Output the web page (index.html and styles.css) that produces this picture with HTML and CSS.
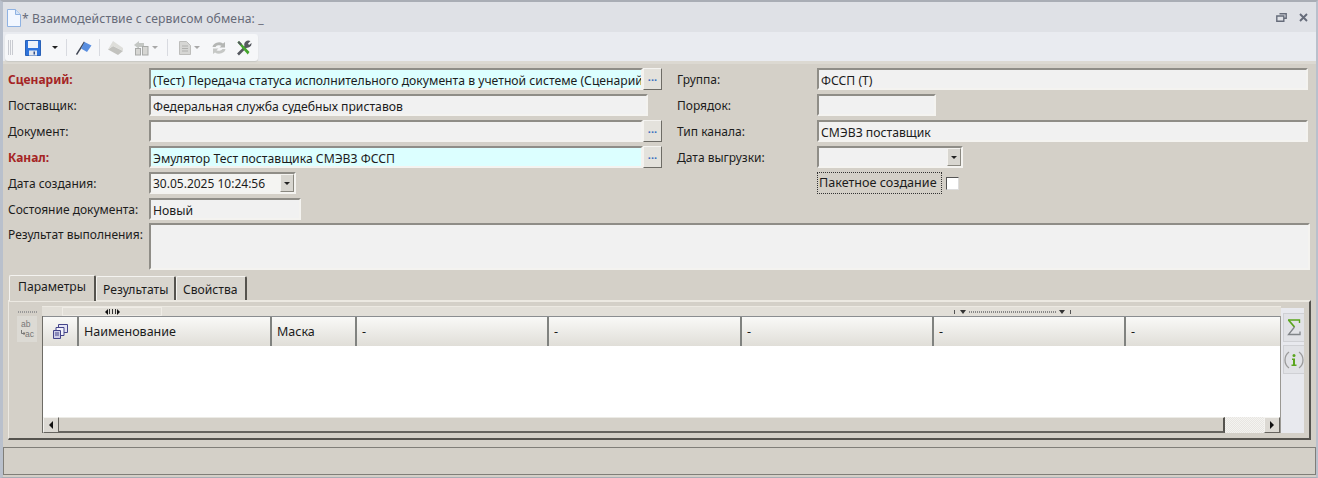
FILE: index.html
```html
<!DOCTYPE html>
<html lang="ru">
<head>
<meta charset="utf-8">
<title>Взаимодействие с сервисом обмена</title>
<link rel="stylesheet" href="styles.css">
</head>
<body>
<div class="window">
  <header class="titlebar">
    <svg class="doc-icon" width="15" height="18" viewBox="0 0 15 18"><path d="M1.500 .5h8l5 5v12h-13z" fill="#f2f7ff" stroke="#8fb2e2"/><path d="M9.500 .5v5h5" fill="#d4e4f8" stroke="#8fb2e2"/></svg>
    <span class="title">* Взаимодействие с сервисом обмена: _</span>
    <span class="spacer"></span>
    <svg class="win-btn" width="11" height="9" viewBox="0 0 11 9"><path d="M3.500 .8h6.700v4.400H8.500M.8 3h7v5.200h-7z" fill="none" stroke="#666c7a" stroke-width="1.400"/></svg>
    <svg class="win-btn close" width="9" height="9" viewBox="0 0 9 9"><path d="M1 1l7 7M8 1l-7 7" stroke="#666c7a" stroke-width="1.900"/></svg>
  </header>
  <div class="toolstrip">
    <div class="toolbar">
      <span class="grip"></span>
      <svg class="tool gap-11" width="16" height="16" viewBox="0 0 16 16"><path d="M.5 .5h15v15H.5z" fill="#2f74dc" stroke="#2a62b8"/><rect x="3" y="1" width="10" height="7" fill="#eef3fa"/><rect x="4" y="10.500" width="8" height="5" fill="#e4e8ee"/><rect x="8.500" y="11.500" width="1.500" height="3" fill="#2f4f8f"/></svg>
      <span class="caret dark gap-8"></span>
      <span class="sep"></span>
      <svg class="tool gap-7" width="16" height="16" viewBox="0 0 16 16"><path d="M.5 14.500L8.500 2" stroke="#3f4552" stroke-width="1.400"/><path d="M8.500 2L15.500 5.500 11 12 5 8.500z" fill="#5a8fe0"/></svg>
      <span class="sep tight"></span>
      <svg class="tool gap-9" width="17" height="16" viewBox="0 0 17 16"><path d="M1 9.500L6 6l10 5-5 4z" fill="#c2c2be"/><path d="M1 9.500L6 1l10 7v3L6 6z" fill="#dededa"/></svg>
      <svg class="tool gap-3" width="16" height="16" viewBox="0 0 16 16"><path d="M1 5l5-4v2h5v4H6v2z" fill="#c4c7c4"/><rect x="2.500" y="8.500" width="5" height="6.500" fill="#d6d6d3" stroke="#a8aaa8"/><rect x="9.500" y="6.500" width="5.500" height="8.500" fill="#d6d6d3" stroke="#a8aaa8"/></svg>
      <span class="caret gap-9"></span>
      <span class="sep"></span>
      <svg class="tool gap-1" width="16" height="16" viewBox="0 0 16 16"><path d="M2.500 1.500h7l4 4v9h-11z" fill="#d6d6d4" stroke="#bdbdbb"/><path d="M5 6h6M5 8.500h6M5 11h6" stroke="#b0b0ae"/></svg>
      <span class="caret gap-11"></span>
      <svg class="tool gap-9" width="16" height="16" viewBox="0 0 16 16"><path d="M1.500 7a6.500 5.500 0 0 1 10.500-3.500L14 2v5.500H8.500l2-1.700a4 3 0 0 0-6 1.200z" fill="#b4b6b4"/><path d="M14.500 9A6.500 5.500 0 0 1 4 12.500L2 14V8.500h5.500l-2 1.700a4 3 0 0 0 6-1.200z" fill="#c6c8c6"/></svg>
      <svg class="tool" width="16" height="16" viewBox="0 0 16 16"><path d="M2 14.500L11 5.500" stroke="#55585f" stroke-width="2.600"/><path d="M9 7a4.200 4.200 0 0 1 5.500-6l-2.500 2.500 1 1.500 2.500-2A4.200 4.200 0 0 1 9 7z" fill="#55585f"/><path d="M1.500 2.500L3 1l10.500 11-1.800 2.500z" fill="#44a52c"/><path d="M1.500 2.500L3 1l3 3-1.500 1.500z" fill="#55585f"/></svg>
    </div>
  </div>

  <main class="form">
    <div class="form-cols">
      <div class="col-left">
        <div class="row"><label class="lbl req">Сценарий:</label><div class="input req-bg grow">(Тест) Передача статуса исполнительного документа в учетной системе (Сценарий</div><button class="dots">...</button></div>
        <div class="row"><label class="lbl">Поставщик:</label><div class="input grow ro">Федеральная служба судебных приставов</div><span class="dots-gap-sm"></span></div>
        <div class="row"><label class="lbl">Документ:</label><div class="input grow ro"></div><button class="dots">...</button></div>
        <div class="row"><label class="lbl req">Канал:</label><div class="input req-bg grow">Эмулятор Тест поставщика СМЭВЗ ФССП</div><button class="dots">...</button></div>
        <div class="row"><label class="lbl">Дата создания:</label><div class="input combo date">30.05.2025 10:24:56<span class="combo-btn"><span class="caret dark flush"></span></span></div></div>
        <div class="row"><label class="lbl">Состояние документа:</label><div class="input ro state">Новый</div></div>
      </div>
      <div class="col-right">
        <div class="row"><label class="lbl rlbl">Группа:</label><div class="input ro grow">ФССП (Т)</div></div>
        <div class="row"><label class="lbl rlbl">Порядок:</label><div class="input ro order"></div></div>
        <div class="row"><label class="lbl rlbl">Тип канала:</label><div class="input ro grow">СМЭВЗ поставщик</div></div>
        <div class="row"><label class="lbl rlbl">Дата выгрузки:</label><div class="input combo ro upload"><span class="combo-btn"><span class="caret dark flush"></span></span></div></div>
        <div class="row"><span class="lbl rlbl"></span><span class="focus-label">Пакетное создание</span><span class="checkbox"></span></div>
      </div>
    </div>
    <div class="result-row"><label class="lbl">Результат выполнения:</label><div class="input ro grow result"></div></div>
  </main>

  <section class="tabs-area">
    <div class="tabs">
      <div class="tab active">Параметры</div>
      <div class="tab t2">Результаты</div>
      <div class="tab t3">Свойства</div>
    </div>
    <div class="tab-panel">
      <div class="side-left">
        <span class="dotted"></span>
        <div class="ab"><span class="ab-line">ab</span><span class="ab-line"><svg width="4" height="7" viewBox="0 0 4 7"><path d="M.5 0v3.500H4M2.500 2l1.500 1.500L2.500 5" fill="none" stroke="#777"/></svg>ac</span></div>
      </div>
      <div class="grid-wrap">
        <div class="ruler">
          <span class="ruler-cell"><i class="arr left tiny"></i><span class="ruler-bars"></span><i class="arr right tiny"></i></span>
          <span class="ruler-right"><span class="tick"></span><i class="tri"></i><span class="ruler-dots"></span><i class="tri"></i><span class="tick"></span></span>
        </div>
        <div class="grid">
          <div class="ghead">
            <div class="hc icon-c"><svg width="15" height="15" viewBox="0 0 15 15"><path d="M5.500 .5h9v8h-9z" fill="#e4e4f4" stroke="#44448a"/><path d="M3 3.500h8v8H3z" fill="#f2f2fa" stroke="#44448a"/><path d="M.5 6.500h7v8h-7z" fill="#cfcfe8" stroke="#44448a"/><path d="M2 9h4M2 11h4" stroke="#44448a"/></svg></div>
            <div class="hc">Наименование</div>
            <div class="hc">Маска</div>
            <div class="hc">-</div>
            <div class="hc">-</div>
            <div class="hc">-</div>
            <div class="hc">-</div>
            <div class="hc last">-</div>
          </div>
          <div class="gbody"></div>
          <div class="hscroll">
            <span class="sb-btn"><i class="arr left"></i></span>
            <span class="sb-thumb"></span>
            <span class="sb-track"></span>
            <span class="sb-btn"><i class="arr right"></i></span>
          </div>
        </div>
      </div>
      <div class="side-right">
        <div class="side-btn"><svg width="14" height="17" viewBox="0 0 14 17"><path d="M1 1h11.500v3" fill="none" stroke="#5aa51e" stroke-width="1.400"/><path d="M1.500 1l6 7" fill="none" stroke="#5aa51e" stroke-width="1.800"/><path d="M7.500 8l-6 7.500h11.500v-3" fill="none" stroke="#808488" stroke-width="1.300"/></svg></div>
        <div class="side-btn"><svg width="20" height="20" viewBox="0 0 20 20"><path d="M5 2a10 10 0 0 0 0 16M15 2a10 10 0 0 1 0 16" fill="none" stroke="#9a9a9a" stroke-width="1.300"/><circle cx="10" cy="5.500" r="1.500" fill="#5aa51e"/><path d="M8 8.500h3v6h1.500v1.500h-5v-1.500H9V10H8z" fill="#5aa51e"/></svg></div>
      </div>
    </div>
  </section>

  <footer class="statusbar"></footer>
</div>
</body>
</html>
```
FILE: styles.css
```css
* { box-sizing: border-box; }
html, body { margin: 0; padding: 0; }
body { width: 1318px; height: 478px; overflow: hidden; font-family: "Noto Sans", "DejaVu Sans", sans-serif; font-size: 12.2px; color: #1c1c1c; }

.window { width: 1318px; height: 478px; background: #d4d0c8; border: 1px solid #a9adb5; border-left: 3px solid #b9c0cc; border-right: 2px solid #b9c0cc; border-top: 2px solid #a9adb5; display: flex; flex-direction: column; }

.titlebar { height: 30px; background: #dfe1e6; display: flex; align-items: center; padding: 0 8px 0 3px; flex: none; }
.doc-icon { margin-right: 1px; margin-top: 1px; }
.title { font-size: 12.15px; color: #666a78; letter-spacing: .12px; padding-top: 2px; }
.spacer { flex: 1; }
.close { margin-left: 12px; }

.toolstrip { height: 32px; background: #e9ebf0; flex: none; border-bottom: 3px solid #dcd9d2; padding: 2px 0 0 2px; }
.toolbar { width: 253px; height: 27px; background: #f6f7f9; border-radius: 3px; box-shadow: 0 1px 1px #c8c8c4; display: flex; align-items: center; padding-left: 3px; }
.grip { width: 5px; height: 15px; background: repeating-linear-gradient(90deg, #c9cbd1 0 1px, transparent 1px 2px); margin-right: 12px; }
.tool { flex: none; }
.gap-1 { margin-right: 1px; }
.gap-3 { margin-right: 3px; }
.gap-7 { margin-right: 7px; }
.gap-8 { margin-right: 8px; }
.gap-9 { margin-right: 9px; }
.gap-11 { margin-right: 11px; }
.caret { display: inline-block; width: 0; height: 0; border: 3px solid transparent; border-top: 3px solid #a8a8a8; border-bottom: 0; flex: none; }
.caret.dark { border-top-color: #222; }
.caret.flush { margin: 0; }
.sep { width: 1px; height: 17px; background: #d8dae0; margin-right: 9px; flex: none; }
.sep.tight { margin-right: 7px; }

.form { flex: none; padding: 2px 6px 0 5px; height: 208px; }
.form-cols { display: flex; height: 153px; }
.col-left { width: 654px; flex: none; }
.col-right { width: 631px; margin-left: 15px; flex: none; }
.row { display: flex; align-items: center; height: 26px; }
.lbl { width: 141px; flex: none; white-space: nowrap; font-size: 12px; }
.rlbl { width: 140px; }
.req { color: #a52424; font-weight: 700; }
.input { height: 22px; line-height: 17px; padding: 2px 2px; background: #f1f1f1; border: 2px solid; border-color: #8f8d87 #f4f3f0 #f4f3f0 #8f8d87; white-space: nowrap; overflow: hidden; }
.grow { flex: 1; min-width: 0; }
.req-bg { background: #dcffff; }
.dots { width: 19px; height: 22px; padding: 0 0 6px; font-size: 11px; font-weight: 700; line-height: 1; color: #3a6fc0; background: #e4e2dc; border: 1px solid; border-color: #f4f3f0 #6e6c66 #6e6c66 #f4f3f0; flex: none; font-family: inherit; }
.dots-gap-sm { width: 14px; flex: none; }
.combo { display: flex; justify-content: space-between; align-items: center; padding-right: 0; }
.date { width: 147px; background: #f4f4f2; font-size: 12px; }
.state { width: 152px; }
.order { width: 119px; }
.upload { width: 146px; justify-content: flex-end; }
.combo-btn { width: 14px; height: 18px; background: #d8d6d0; border: 1px solid; border-color: #f4f3f0 #8a8880 #8a8880 #f4f3f0; display: flex; align-items: center; justify-content: center; flex: none; }
.focus-label { height: 22px; font-size: 12.6px; line-height: 21px; padding: 0 2px; outline: 1px dotted #333; outline-offset: -1px; white-space: nowrap; width: 125px; }
.checkbox { width: 13px; height: 13px; background: #fff; border: 1px solid; border-color: #555 #ddd #ddd #555; margin-left: 4px; }

.result-row { display: flex; height: 47px; margin-top: 4px; }
.result-row .lbl { padding-top: 3px; }
.result { height: 47px; }

.tabs-area { flex: none; margin: 2px 5px 0 5px; }
.tabs { display: flex; height: 26px; align-items: flex-end; padding-left: 1px; }
.tab { height: 24px; padding: 4px 0 0 6px; background: #d8d5ce; border-top: 1px solid #f4f3f0; border-left: 1px solid #f4f3f0; border-right: 2px solid #55534e; border-radius: 2px 2px 0 0; white-space: nowrap; font-size: 12.15px; }
.tab.active { height: 26px; width: 87px; padding: 2px 0 0 8px; background: #d4d0c8; position: relative; top: 1px; z-index: 1; }
.t2 { width: 80px; }
.t3 { width: 71px; }
.tab-panel { height: 140px; border-top: 2px solid #ece9e2; border-left: 1px solid #ece9e2; border-right: 2px solid #55534e; border-bottom: 2px solid #55534e; display: flex; padding: 4px 5px 5px 6px; }
.side-left { width: 27px; flex: none; display: flex; flex-direction: column; align-items: flex-start; }
.dotted { width: 20px; height: 2px; margin: 5px 0 0 3px; background: repeating-linear-gradient(90deg, #999 0 1px, transparent 1px 2px); }
.ab { width: 20px; height: 26px; margin: 3px 0 0 2px; background: #dcdad4; color: #777; font-family: "Liberation Sans", sans-serif; font-size: 8.5px; line-height: 10px; padding: 3px 0 0 4px; display: flex; flex-direction: column; }
.ab-line { display: block; white-space: nowrap; }
.grid-wrap { width: 1239px; flex: none; display: flex; flex-direction: column; }
.ruler { height: 10px; display: flex; justify-content: space-between; background: #e2dfd8; border-top: 1px solid #ece9e2; }
.ruler-cell { width: 100px; margin-left: 20px; border: 1px solid #efece6; display: flex; align-items: center; justify-content: center; gap: 1px; }
.ruler-bars { width: 7px; height: 5px; background: repeating-linear-gradient(90deg, #333 0 1px, transparent 1px 3px); }
.ruler-right { display: flex; align-items: center; margin-right: 208px; gap: 3px; }
.tick { width: 1px; height: 4px; background: #555; margin: 0 2px; }
.tri { width: 0; height: 0; border: 3px solid transparent; border-top: 4px solid #333; border-bottom: 0; }
.ruler-dots { width: 87px; height: 2px; background: repeating-linear-gradient(90deg, #888 0 1px, transparent 1px 2px); }
.grid { flex: 1; border-left: 1px solid #6e6c66; border-right: 1px solid #9a9893; display: flex; flex-direction: column; background: #fff; }
.ghead { display: grid; grid-template-columns: 36px 193px 85px 192px 193px 192px 192px 1fr; height: 30px; flex: none; border-top: 1px solid #8a8d90; border-bottom: 1px solid #7f8a90; }
.hc { background: linear-gradient(#f9f9f7, #e0ded8); border-right: 2px solid #80827f; font-size: 12.5px; line-height: 29px; padding-left: 5px; white-space: nowrap; }
.hc.last { border-right: 0; }
.icon-c { display: flex; align-items: center; justify-content: center; padding-left: 0; }
.gbody { flex: 1; background: #fff; }
.hscroll { height: 16px; display: flex; flex: none; background: #d4d0c8; }
.sb-btn { width: 16px; flex: none; background: #dcd9d3; border: 1px solid; border-color: #f4f3f0 #66645f #66645f #f4f3f0; display: flex; align-items: center; justify-content: center; }
.sb-thumb { flex: 1; background: #d4d0c8; border-top: 1px solid #ecebe6; border-right: 2px solid #55534e; border-bottom: 2px solid #66645f; }
.sb-track { width: 39px; flex: none; background: repeating-conic-gradient(#e8e6e2 0 25%, #f4f3f0 0 50%) 0 0 / 2px 2px; }
.arr { width: 0; height: 0; border: 4px solid transparent; }
.arr.left { border-right: 4px solid #111; border-left: 0; }
.arr.right { border-left: 4px solid #111; border-right: 0; }
.arr.tiny { border-width: 3px; }
.arr.tiny.left { border-left: 0; }
.arr.tiny.right { border-right: 0; }
.side-right { width: 23px; flex: none; background: #e8e9ee; margin-top: 2px; padding-top: 5px; }
.side-btn { height: 29px; margin: 0 0 3px 2px; background: #e1e2e6; border-top: 1px solid #cfd0d4; border-left: 1px solid #cfd0d4; border-bottom: 1px solid #cfd0d4; display: flex; align-items: center; justify-content: center; }

.statusbar { flex: none; height: 28px; margin: 7px 0 0; background: #d4d0c8; border: 1px solid #807e78; }
```
